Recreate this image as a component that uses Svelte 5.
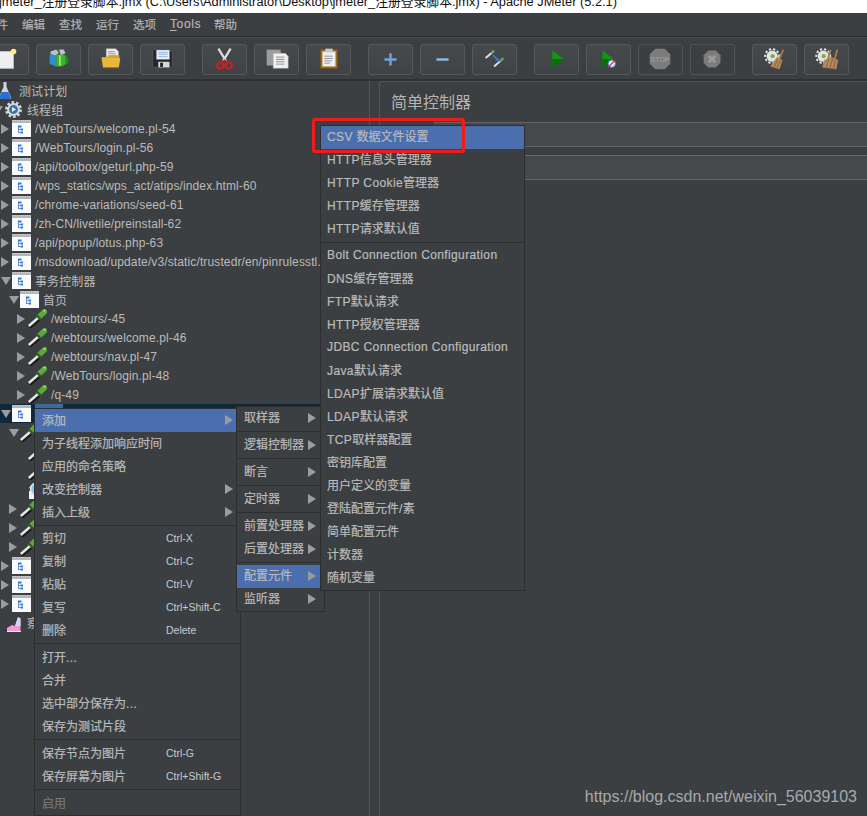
<script>
  const menus = ['件', '编辑', '查找', '运行', '选项', 'Tools', '帮助'];

  const tree = [
    { l: -1, i: 'flask', t: '测试计划', a: '' },
    { l: 0, i: 'gear', t: '线程组', a: 'd' },
    ...['/WebTours/welcome.pl-54', '/WebTours/login.pl-56', '/api/toolbox/geturl.php-59', '/wps_statics/wps_act/atips/index.html-60', '/chrome-variations/seed-61', '/zh-CN/livetile/preinstall-62', '/api/popup/lotus.php-63', '/msdownload/update/v3/static/trustedr/en/pinrulesstl.'].map((t) => ({ l: 1, i: 'box', t, a: 'r' })),
    { l: 1, i: 'box', t: '事务控制器', a: 'd' },
    { l: 2, i: 'box', t: '首页', a: 'd' },
    ...['/webtours/-45', '/webtours/welcome.pl-46', '/webtours/nav.pl-47', '/WebTours/login.pl-48', '/q-49'].map((t) => ({ l: 3, i: 'pipe', t, a: 'r' })),
    { l: 1, i: 'box', t: '', a: 'd', sel: true },
    { l: 2, i: 'pipe', t: '', a: 'd' },
    { l: 3, i: 'pipe', t: '', a: '' },
    { l: 3, i: 'pipe', t: '', a: '' },
    { l: 3, i: 'lens', t: '', a: '' },
    { l: 2, i: 'pipe', t: '', a: 'r' },
    { l: 2, i: 'pipe', t: '', a: 'r' },
    { l: 2, i: 'pipe', t: '', a: 'r' },
    { l: 1, i: 'box', t: '', a: 'r' },
    { l: 1, i: 'box', t: '', a: 'r' },
    { l: 1, i: 'box', t: '', a: 'r' },
    { l: 0, i: 'chart', t: '察', a: '' }
  ];

  const ctx = [
    { t: '添加', sub: true, on: true }, { t: '为子线程添加响应时间' }, { t: '应用的命名策略' }, { t: '改变控制器', sub: true }, { t: '插入上级', sub: true },
    { sep: true, tight: true },
    { t: '剪切', k: 'Ctrl-X' }, { t: '复制', k: 'Ctrl-C' }, { t: '粘贴', k: 'Ctrl-V' }, { t: '复写', k: 'Ctrl+Shift-C' }, { t: '删除', k: 'Delete' },
    { sep: true },
    { t: '打开...' }, { t: '合并' }, { t: '选中部分保存为...' }, { t: '保存为测试片段' },
    { sep: true },
    { t: '保存节点为图片', k: 'Ctrl-G' }, { t: '保存屏幕为图片', k: 'Ctrl+Shift-G' },
    { sep: true },
    { t: '启用', off: true }
  ];

  const add = [
    { t: '取样器', sub: true }, { sep: true }, { t: '逻辑控制器', sub: true }, { sep: true }, { t: '断言', sub: true }, { sep: true }, { t: '定时器', sub: true }, { sep: true },
    { t: '前置处理器', sub: true }, { t: '后置处理器', sub: true }, { sep: true }, { t: '配置元件', sub: true, on: true }, { t: '监听器', sub: true }
  ];

  const config = [
    { t: 'CSV 数据文件设置', on: true }, { t: 'HTTP信息头管理器' }, { t: 'HTTP Cookie管理器' }, { t: 'HTTP缓存管理器' }, { t: 'HTTP请求默认值' },
    { sep: true },
    ...['Bolt Connection Configuration', 'DNS缓存管理器', 'FTP默认请求', 'HTTP授权管理器', 'JDBC Connection Configuration', 'Java默认请求', 'LDAP扩展请求默认值', 'LDAP默认请求', 'TCP取样器配置', '密钥库配置', '用户定义的变量', '登陆配置元件/素', '简单配置元件', '计数器', '随机变量'].map((t) => ({ t }))
  ];

  const runs = (s) => s.match(/[\x00-\x7f]+|[^\x00-\x7f]+/g) ?? [];
  const isLatin = (s) => /^[\x00-\x7f]/.test(s);
  const indent = (l) => 1 + 8 * (l - 1);
</script>

{#snippet ico(name)}
  <svg class="ti" viewBox="0 0 19 19" width="19" height="19" aria-hidden="true">
    {#if name === 'box'}
      <rect x="0" y="1" width="19" height="17" fill="#fafafa" />
      <rect x="0" y="1" width="19" height="3" fill="#b4b7b9" />
      <path d="M1 1.500h17" stroke="#e4e4e4" stroke-width=".6" stroke-dasharray="1 1" />
      <path d="M6.500 8v6M6.500 10.500h2M6.500 13.500h2" fill="none" stroke="#6a8cc0" stroke-width="1" />
      <rect x="6" y="6.500" width="3.500" height="2" fill="#2a78e0" />
      <rect x="8.500" y="9.500" width="2.500" height="2" fill="#2a78e0" />
      <rect x="8.500" y="12.500" width="2.500" height="2" fill="#2a78e0" />
    {:else if name === 'pipe'}
      <path d="M1.500 18.500 11 10.500" stroke="#17191a" stroke-width="3.200" fill="none" />
      <path d="M.8 17 10 9" stroke="#e6e8e8" stroke-width="2.400" fill="none" />
      <path d="M11.500 7.500 16.500 2.800" stroke="#5da83e" stroke-width="5.400" stroke-linecap="round" fill="none" />
      <path d="M15.500 2 17.500 1.500" stroke="#a8e08c" stroke-width="1.400" fill="none" />
      <path d="M8.800 6.200l3.800 4" stroke="#2c5d22" stroke-width="2" fill="none" />
    {:else if name === 'flask'}
      <path d="M7.500 1h3v5l4.500 10c.5 1.300-.2 2-1.300 2H4.300c-1.100 0-1.800-.7-1.300-2L7.500 6z" fill="#cfd6dc" />
      <path d="M5.500 11h7l2.300 5.500c.3 1-.3 1.500-1 1.500H4.200c-.8 0-1.300-.5-1-1.500z" fill="#2a6fd0" />
    {:else if name === 'gear'}
      <circle cx="9.500" cy="9.500" r="7" fill="none" stroke="#cfd2d4" stroke-width="3" stroke-dasharray="2.600 1.800" />
      <circle cx="9.500" cy="9.500" r="6.400" fill="#d4d6d8" />
      <circle cx="9.500" cy="9.500" r="4.400" fill="#3a6db0" />
      <path d="M8 7l4 2.500L8 12z" fill="#e8eef8" />
    {:else if name === 'lens'}
      <path d="M1.500 8 9 1" stroke="#d8d8d8" stroke-width="1.500" />
      <rect x="1" y="11" width="15" height="8" fill="#f3f3f3" />
      <circle cx="8.500" cy="9" r="6" fill="#8fc4ee" stroke="#d8e6f0" stroke-width="1.500" />
    {:else if name === 'chart'}
      <path d="M3 18v-3l5-3 3 1 3-9 2.500 1.500V18z" fill="#f19ad8" />
      <path d="M11 13l3-9 2.500 1.500V13z" fill="#cdd8f2" />
      <path d="M3 18.500h14" stroke="#e8e8e8" stroke-width="1" />
    {/if}
  </svg>
{/snippet}

{#snippet menuItems(list)}
  {#each list as it}
    {#if it.sep}
      <div class="sep" class:tight={it.tight}></div>
    {:else}
      <div class="item" class:on={it.on} class:off={it.off}>
        <span class="label">{#each runs(it.t) as r}<span class:lat={isLatin(r)}>{r}</span>{/each}</span>
        {#if it.k}<span class="key">{it.k}</span>{/if}
        {#if it.sub}<i class="caret"></i>{/if}
      </div>
    {/if}
  {/each}
{/snippet}

<div class="app">
  <div class="title"><span>jmeter_注册登录脚本.jmx (C:\Users\Administrator\Desktop\jmeter_注册登录脚本.jmx) - Apache JMeter (5.2.1)</span></div>

  <nav class="menubar">
    {#each menus as m}<span class="mb" class:first={m === '件'} class:t={m === 'Tools'}>{#if m === 'Tools'}<span class="tools"><u>T</u>ools</span>{:else}{m}{/if}</span>{/each}
  </nav>

  <div class="toolbar">
    <div class="group">
      <button class="tb" aria-label="新建"><svg viewBox="0 0 45 31"><rect x="9" y="8" width="21" height="18" fill="#efefef" stroke="#bdbdbd"/><circle cx="30" cy="8" r="3" fill="#ffe97a"/></svg></button>
      <button class="tb" aria-label="模板"><svg viewBox="0 0 45 31"><path d="M13 12l7-2v14l-7-3z" fill="#2b8fd6"/><path d="M14 8l6-2 3 3-3 3-6-1zM23 6h5l2 4-5 2z" fill="#b9c2c8"/><path d="M20 11l10 1 1 9-5 3h-6z" fill="#3bb52a"/><path d="M24 12v11" stroke="#b8f0a0" stroke-width="1.500"/><path d="M30 12l3 3v6l-3 1z" fill="#1f8a1a"/></svg></button>
      <button class="tb" aria-label="打开"><svg viewBox="0 0 45 31"><path d="M18 5h10l3 3v8H18z" fill="#ececec" stroke="#aaa" stroke-width=".5"/><path d="M20 8h7M20 10h8M20 12h8" stroke="#999"/><path d="M13 14h6l2-2h11v5H14z" fill="#d8a02c"/><path d="M13 15h19c.6 0 1 .4.900 1l-1.500 9H14.500L13 16z" fill="#e9b63f"/><path d="M14.500 25h17v1h-17z" fill="#9e7110"/></svg></button>
      <button class="tb" aria-label="保存"><svg viewBox="0 0 45 31"><path d="M13 6h17l3 3v15c0 1-.5 1-1 1H13c-.5 0-1 0-1-1V7c0-.5.500-1 1-1z" fill="#25272a" stroke="#555"/><rect x="16" y="6.500" width="14" height="10" fill="#e6eef6"/><path d="M18 9h10M18 11h10M18 13.500h10" stroke="#8fb4de"/><rect x="18" y="19" width="12" height="6" fill="#d8d8d8"/><rect x="20" y="20" width="3" height="4.500" fill="#222"/></svg></button>
    </div>
    <div class="group">
      <button class="tb" aria-label="剪切"><svg viewBox="0 0 45 31"><path d="M16 5l8 13M29 5l-8 13" stroke="#dcdcdc" stroke-width="2.400"/><circle cx="18" cy="23" r="3.400" fill="none" stroke="#d41e1e" stroke-width="2.200"/><circle cx="27" cy="23" r="3.400" fill="none" stroke="#d41e1e" stroke-width="2.200"/><path d="M20 20l3-3M25 20l-3-3" stroke="#c41a1a" stroke-width="2"/></svg></button>
      <button class="tb" aria-label="复制"><svg viewBox="0 0 45 31"><rect x="12" y="6" width="15" height="17" fill="#9a9c9e"/><path d="M19 10h13l3 3v13H19z" fill="#f0f0f0" stroke="#aaa" stroke-width=".5"/><path d="M22 14h9M22 16.500h9M22 19h9M22 21.500h9" stroke="#8a8a8a"/></svg></button>
      <button class="tb" aria-label="粘贴"><svg viewBox="0 0 45 31"><rect x="14" y="6" width="18" height="20" fill="#9e6a1c" stroke="#7a4f10" stroke-width=".5"/><rect x="16" y="8" width="14" height="16" fill="#eeeeee"/><rect x="19" y="5" width="8" height="4" fill="#c8c8c8"/><path d="M18 13h9M18 15.500h9M18 18h8M18 20.500h6" stroke="#909090"/></svg></button>
    </div>
    <div class="group">
      <button class="tb" aria-label="展开"><svg viewBox="0 0 45 31"><path d="M22.500 10v13M16 16.500h13" stroke="#6ea3e0" stroke-width="2.600"/></svg></button>
      <button class="tb" aria-label="折叠"><svg viewBox="0 0 45 31"><path d="M16 16.500h13" stroke="#8db6e6" stroke-width="2.600"/></svg></button>
      <button class="tb" aria-label="切换"><svg viewBox="0 0 45 31"><path d="M13 15l7-6" stroke="#e0e0e0" stroke-width="2"/><path d="M19 10l3-3" stroke="#6fa866" stroke-width="2.500"/><path d="M22 24l7-6" stroke="#e0e0e0" stroke-width="2"/><path d="M28 19l4-4" stroke="#6fa866" stroke-width="2.500"/><path d="M21 12l5 5" stroke="#2f7fe8" stroke-width="1.600"/><path d="M27 18l-4 0 3.500-3.500z" fill="#2f7fe8"/></svg></button>
    </div>
    <div class="group">
      <button class="tb" aria-label="启动"><svg viewBox="0 0 45 31"><path d="M18 7l12 9L18 25z" fill="#0f9a0f"/><path d="M18 16h12L18 25z" fill="#066f06"/></svg></button>
      <button class="tb" aria-label="不停顿开始"><svg viewBox="0 0 45 31"><path d="M16 7l12 9L16 25z" fill="#0f9a0f"/><path d="M16 16h12L16 25z" fill="#066f06"/><circle cx="26" cy="21" r="4" fill="#dfe9f7" stroke="#2f6fc8"/><path d="M22 25l8-8" stroke="#e02020" stroke-width="1.300"/></svg></button>
      <button class="tb dim" aria-label="停止"><svg viewBox="0 0 45 31"><path d="M17 5h10l6 6v10l-6 6H17l-6-6V11z" fill="#7c7c7c"/><text x="22" y="19.500" text-anchor="middle" class="stop">STOP</text></svg></button>
      <button class="tb dim" aria-label="关闭"><svg viewBox="0 0 45 31"><path d="M18 7h8l5 5v8l-5 5h-8l-5-5v-8z" fill="#7c7c7c"/><path d="M18.500 12.500l7 7M25.500 12.500l-7 7" stroke="#9b9b9b" stroke-width="3"/></svg></button>
    </div>
    <div class="group">
      <button class="tb" aria-label="清除"><svg viewBox="0 0 45 31"><circle cx="20" cy="13" r="6" fill="#e4e4e4"/><circle cx="20" cy="13" r="7.500" fill="none" stroke="#e4e4e4" stroke-width="2" stroke-dasharray="2.500 2"/><circle cx="20.500" cy="13" r="2.300" fill="#7fae3a"/><path d="M32 6l-4 9" stroke="#a87a4a" stroke-width="2"/><path d="M25 14l6 3-3 10-10-3z" fill="#b48a5c"/><path d="M22 25l4-9M25 26l4-9" stroke="#8a6238"/></svg></button>
      <button class="tb" aria-label="清除全部"><svg viewBox="0 0 45 31"><circle cx="19" cy="13" r="6" fill="#e4e4e4"/><circle cx="19" cy="13" r="7.500" fill="none" stroke="#e4e4e4" stroke-width="2" stroke-dasharray="2.500 2"/><circle cx="19.500" cy="13" r="2.300" fill="#7fae3a"/><path d="M27 6l-3 10M34 6l-3 11" stroke="#a87a4a" stroke-width="2"/><path d="M20 17l7-3 8 3-2 10-15-2z" fill="#b48a5c"/><path d="M22 26l3-10M26 26l3-10M30 27l2-10" stroke="#8a6238"/></svg></button>
    </div>
  </div>

  <main class="main">
    <section class="tree">
      {#each tree as row}
        <div class="row" class:sel={row.sel}>
          <div class="row-in" style={`margin-left:${indent(row.l)}px`}>
            <span class="tw">{#if row.a === 'r'}<i class="ar"></i>{:else if row.a === 'd'}<i class="ad"></i>{/if}</span>
            {@render ico(row.i)}
            <span class="rt">{row.t}</span>
          </div>
        </div>
      {/each}
    </section>
    <section class="panel">
      <h2>简单控制器</h2>
      <div class="field"><span class="fl"></span><span class="fi"></span></div>
      <div class="field"><span class="fl"></span><span class="fi"></span></div>
    </section>
  </main>

  <div class="menu m-ctx">{@render menuItems(ctx)}</div>
  <div class="menu m-add">{@render menuItems(add)}</div>
  <div class="menu m-cfg">{@render menuItems(config)}</div>
  <div class="mark"></div>
  <div class="wm">https://blog.csdn.net/weixin_56039103</div>
</div>

<style>
  :global(body) { margin: 0; background: #3c3f41; }
  .app {
    position: relative;
    width: 867px;
    height: 816px;
    overflow: hidden;
    background: #3c3f41;
    color: #bbbbbb;
    font: 12px "Liberation Sans", "Noto Sans CJK SC", sans-serif;
    display: flex;
    flex-direction: column;
  }
  .title { height: 13px; background: #fff; color: #111; overflow: hidden; font-size: 12.800px; line-height: 16px; white-space: nowrap; flex: none; }
  .title span { display: block; margin-top: -6px; margin-left: -1px; }
  .menubar { height: 23px; flex: none; box-sizing: content-box; display: flex; align-items: center; border-bottom: 1px solid #2b2b2b; box-shadow: 0 1px 0 #4a4d4f; }
  .mb { margin-right: 14px; font-size: 11.500px; color: #b5b5b5; position: relative; top: -1px; -webkit-text-stroke: .2px #b5b5b5; }
  .mb.first { margin-left: -3.500px; }
  .mb.t { margin-right: 13px; }
  .tools { letter-spacing: .6px; font-size: 12px; }
  .mb u { text-underline-offset: 2px; }
  .toolbar { height: 44px; flex: none; box-sizing: border-box; padding: 7px 0 5px; display: flex; gap: 17px; margin-left: -16px; border-bottom: 2px solid #2e3032; width: 900px; }
  .group { display: flex; gap: 7px; }
  .tb { width: 45px; height: 31px; padding: 0; margin: 0; background: linear-gradient(#45494b, #424648 60%, #3f4244); border: 1px solid #56595b; border-radius: 3px; box-sizing: border-box; overflow: hidden; }
  .tb.dim { background: #3c3f41; border-color: #505355; }
  .tb svg { display: block; width: 43px; height: 29px; margin-top: -2px; }
  .stop { font: bold 7.500px "Liberation Sans", sans-serif; fill: #999; }
  .main { flex: 1; display: flex; min-height: 0; }
  .tree { width: 369px; flex: none; border-right: 1px solid #555; overflow: hidden; }
  .row { height: 19px; white-space: nowrap; }
  .row.sel { background: #0d293e; }
  .row-in { display: flex; align-items: center; height: 19px; }
  .tw { width: 11px; flex: none; display: flex; align-items: center; }
  .ar { width: 0; height: 0; border-left: 8px solid #9a9c9e; border-top: 5px solid transparent; border-bottom: 5px solid transparent; }
  .ad { width: 0; height: 0; border-top: 8px solid #9a9c9e; border-left: 5px solid transparent; border-right: 5px solid transparent; }
  .ti { flex: none; margin-right: 4px; }
  .rt { font-size: 12px; letter-spacing: 0.12px; color: #bbb; }
  .row.sel .rt { width: 28px; height: 19px; background: #3d6a99; }
  .panel { flex: 1; margin-left: 9px; border-left: 1px solid #555; border-top: 1px solid #555; border-top-left-radius: 3px; padding-left: 11px; min-width: 0; }
  h2 { margin: 11px 0 10px; font-size: 16px; font-weight: 400; line-height: 19px; color: #b5b5b5; }
  .field { display: flex; height: 25px; align-items: center; margin-bottom: 8px; }
  .fl { width: 43px; flex: none; }
  .fi { flex: 1; height: 25px; box-sizing: border-box; background: #45494a; border-top: 1px solid #646464; border-bottom: 1px solid #646464; }

  .menu { position: absolute; box-sizing: border-box; background: #3c3f41; border: 1px solid #2c2e30; }
  .m-ctx { left: 34px; top: 408px; width: 207px; height: 408px; }
  .m-add { left: 236px; top: 406px; width: 89px; height: 206px; }
  .m-cfg { left: 320px; top: 125px; width: 205px; height: 466px; }
  .item { height: 23px; box-sizing: border-box; padding: 0 0 2px 7px; display: flex; align-items: center; position: relative; color: #bbb; font-size: 12px; white-space: nowrap; -webkit-text-stroke: .2px currentColor; }
  .m-add .item, .m-cfg .item { padding-bottom: 4px; }
  .m-cfg .item { padding-left: 6px; }
  .item.on { background: #4b6eaf; }
  .item.off { color: #777; }
  .lat { letter-spacing: 0.38px; font-size: 12px; }
  .sep { box-sizing: border-box; border-top: 1px solid #2c2e30; margin-top: 1px; height: 3px; }
  .sep.tight { height: 2px; }
  .key { position: absolute; left: 131px; font-size: 10.500px; color: #c4ccd4; -webkit-text-stroke: 0; }
  .caret { position: absolute; right: 7px; top: 6px; width: 0; height: 0; border-left: 8px solid #9a9c9e; border-top: 5px solid transparent; border-bottom: 5px solid transparent; }
  .m-add .caret { right: 8px; }
  .mark { position: absolute; left: 312px; top: 118px; width: 153px; height: 35px; box-sizing: border-box; border: 3px solid #f01c1c; border-radius: 3px; }
  .wm { position: absolute; right: 10px; top: 788px; font-size: 16px; line-height: 18px; color: #a8aaac; }
</style>
